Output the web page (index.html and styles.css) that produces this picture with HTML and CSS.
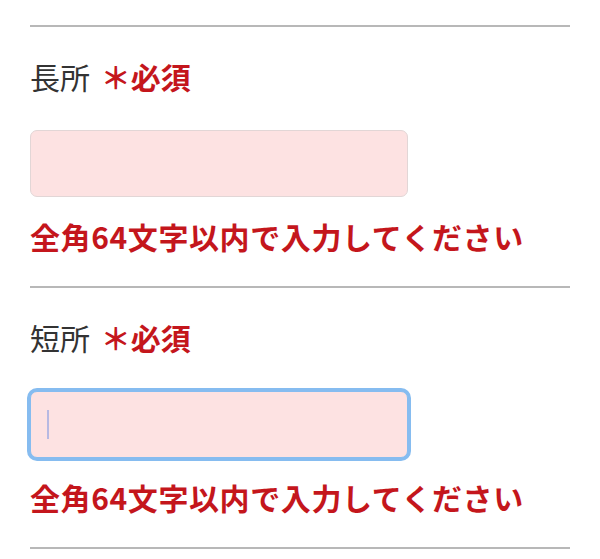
FILE: index.html
```html
<!DOCTYPE html>
<html lang="ja">

<head>
  <meta charset="UTF-8">
  <title>長所・短所</title>
  <link rel="stylesheet" href="styles.css">
</head>

<body>
  <form class="profile-form">
    <div class="field">
      <label class="field-label" for="strength">長所 <span class="required">＊必須</span></label>
      <div class="input-wrap">
        <input type="text" id="strength" name="strength" class="text-input">
      </div>
      <p class="error-message">全角64文字以内で入力してください</p>
    </div>

    <div class="field">
      <label class="field-label" for="weakness">短所 <span class="required">＊必須</span></label>
      <div class="input-wrap">
        <input type="text" id="weakness" name="weakness" class="text-input is-focused">
        <span class="caret"></span>
      </div>
      <p class="error-message">全角64文字以内で入力してください</p>
    </div>
  </form>
</body>

</html>
```

FILE: styles.css
```css
body {
  margin: 0;
  background: #ffffff;
  font-family: "Noto Sans CJK JP", "Noto Sans", sans-serif;
}

.profile-form {
  padding: 25px 30px 0;
}

.field {
  border-top: 2px solid #b8b8b8;
  padding: 31px 0 32px;
}

.field:last-child {
  border-bottom: 2px solid #b8b8b8;
}

.field-label {
  display: block;
  font-size: 30px;
  line-height: 36px;
  color: #333333;
  margin-bottom: 36px;
}

.required {
  color: #c4161c;
  font-weight: bold;
  margin-left: 4px;
}

.input-wrap {
  position: relative;
  width: 378px;
}

.text-input {
  display: block;
  box-sizing: border-box;
  width: 378px;
  height: 67px;
  padding: 0 16px;
  font-size: 30px;
  background: #fde2e2;
  border: 1px solid #e2d6d6;
  border-radius: 7px;
  outline: none;
}

.text-input.is-focused {
  border-color: #86bcf0;
  box-shadow: 0 0 0 3px #86bcf0;
}

/* text cursor inside the focused box */
.caret {
  position: absolute;
  left: 17px;
  top: 19px;
  width: 2px;
  height: 29px;
  background: #b7b9e2;
}

.error-message {
  margin: 21px 0 0;
  font-size: 30px;
  line-height: 36px;
  font-weight: bold;
  letter-spacing: 0.6px;
  color: #c4161c;
}
```
